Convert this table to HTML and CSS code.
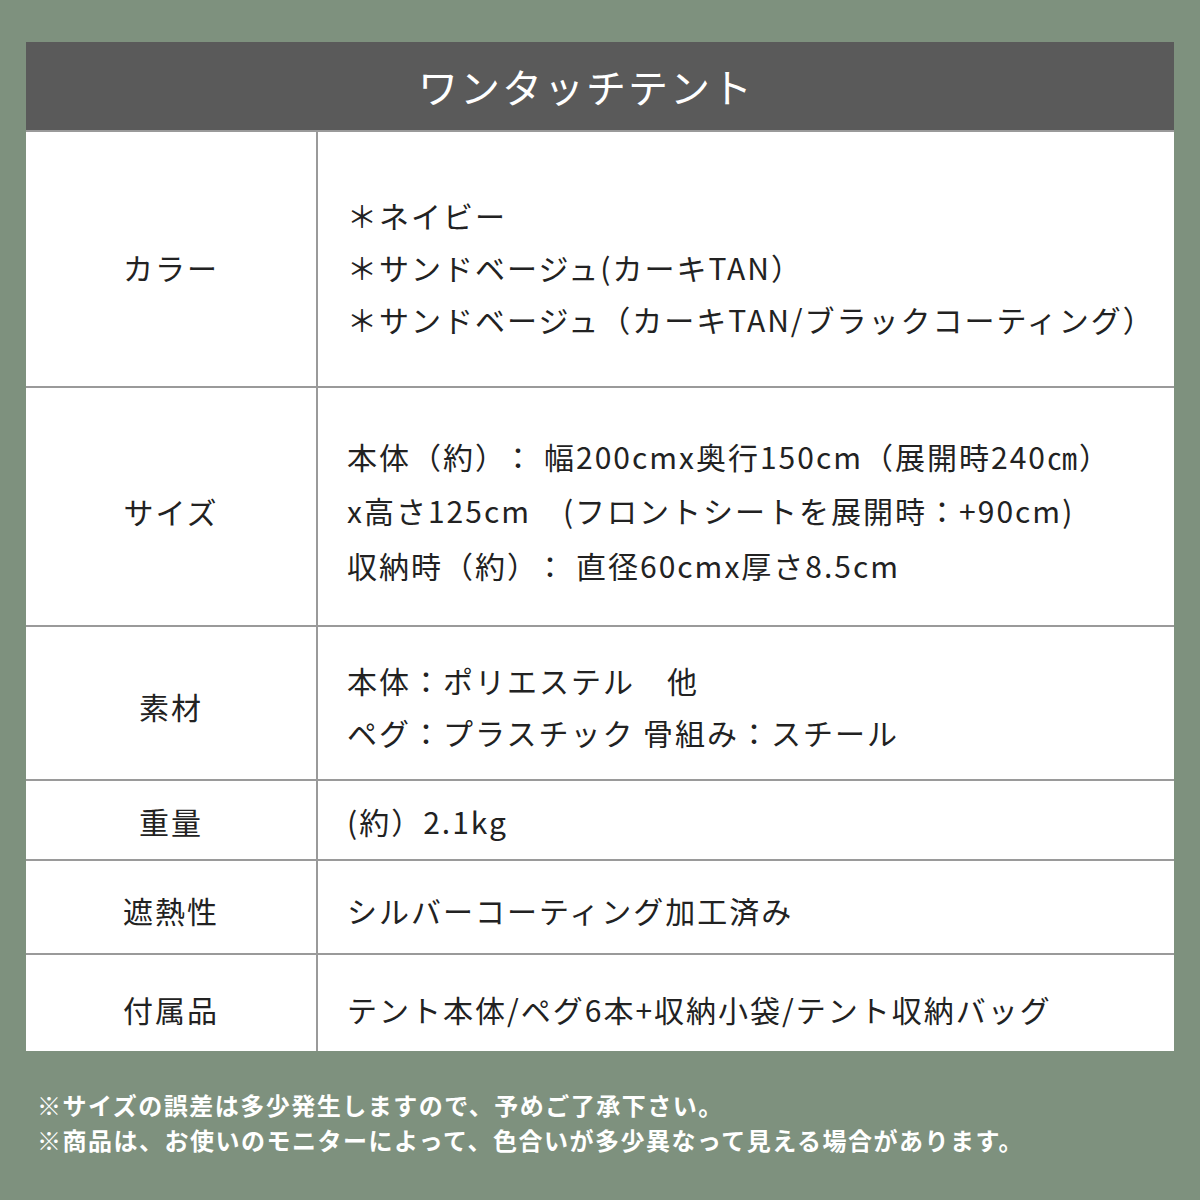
FILE: index.html
```html
<!DOCTYPE html>
<html lang="ja">
<head>
<meta charset="utf-8">
<title>ワンタッチテント</title>
<link rel="stylesheet" href="styles.css">
</head>
<body>
<div class="page">
  <div class="spec">
    <div class="spec-title">ワンタッチテント</div>
    <div class="spec-row row-color">
      <div class="spec-label">カラー</div>
      <div class="spec-value">
        <p>＊ネイビー</p>
        <p>＊サンドベージュ(カーキTAN）</p>
        <p>＊サンドベージュ（カーキTAN/ブラックコーティング）</p>
      </div>
    </div>
    <div class="spec-row row-size">
      <div class="spec-label">サイズ</div>
      <div class="spec-value">
        <p>本体（約）<span class="sep">：</span>幅200cmx奥行150cm（展開時240㎝）</p>
        <p>x高さ125cm　(フロントシートを展開時：+90cm)</p>
        <p>収納時（約）<span class="sep">：</span>直径60cmx厚さ8.5cm</p>
      </div>
    </div>
    <div class="spec-row row-material">
      <div class="spec-label">素材</div>
      <div class="spec-value">
        <p>本体：ポリエステル　他</p>
        <p>ペグ：プラスチック 骨組み：スチール</p>
      </div>
    </div>
    <div class="spec-row row-weight">
      <div class="spec-label">重量</div>
      <div class="spec-value">
        <p>(約）2.1kg</p>
      </div>
    </div>
    <div class="spec-row row-heat">
      <div class="spec-label">遮熱性</div>
      <div class="spec-value">
        <p>シルバーコーティング加工済み</p>
      </div>
    </div>
    <div class="spec-row row-acc">
      <div class="spec-label">付属品</div>
      <div class="spec-value">
        <p>テント本体/ペグ6本+収納小袋/テント収納バッグ</p>
      </div>
    </div>
  </div>
  <div class="notes">
    <p>※サイズの誤差は多少発生しますので、予めご了承下さい。</p>
    <p>※商品は、お使いのモニターによって、色合いが多少異なって見える場合があります。</p>
  </div>
</div>
</body>
</html>
```

FILE: styles.css
```css
* {
  box-sizing: border-box;
}

body {
  margin: 0;
  background: #7e917e;
  font-family: "Noto Sans CJK JP", "Noto Sans", sans-serif;
  color: #222;
}

p {
  margin: 0;
}

.page {
  width: 1200px;
  height: 1200px;
  padding: 42px 26px 0;
}

.spec {
  background: #fff;
}

.spec-title {
  height: 90px;
  background: #5a5a5a;
  color: #fff;
  font-size: 40px;
  font-weight: 400;
  letter-spacing: 2px;
  display: flex;
  align-items: center;
  justify-content: center;
  padding-right: 28px;
  border-bottom: 2px solid #9a9a9a;
}

.spec-row {
  --shift: 0px;
  display: flex;
  border-bottom: 2px solid #9a9a9a;
}

.spec-row:last-child {
  border-bottom: none;
}

.spec-row > div {
  padding-top: var(--shift);
}

.spec-label {
  width: 292px;
  flex: none;
  border-right: 2px solid #9a9a9a;
  display: flex;
  align-items: center;
  justify-content: center;
  font-size: 30px;
  font-weight: 400;
  letter-spacing: 2px;
}

.spec-value {
  flex: 1;
  padding-left: 29px;
  display: flex;
  flex-direction: column;
  justify-content: center;
  font-size: 30px;
  font-weight: 400;
  letter-spacing: 2px;
  line-height: 52px;
}

.sep {
  margin: 0 9px 0 11px;
}

.row-color {
  height: 256px;
  --shift: 16px;
}

.row-size {
  height: 239px;
  --shift: 8px;
}

.row-size .spec-value {
  line-height: 54.5px;
}

.row-material {
  height: 154px;
  --shift: 6px;
}

.row-weight {
  height: 80px;
  --shift: 2px;
}

.row-heat {
  height: 94px;
  --shift: 6px;
}

.row-acc {
  height: 96px;
  --shift: 12px;
}

.notes {
  margin-top: 36px;
  padding-left: 11px;
  color: #fff;
  font-size: 24px;
  font-weight: 700;
  letter-spacing: 1.5px;
  line-height: 35px;
}
```
